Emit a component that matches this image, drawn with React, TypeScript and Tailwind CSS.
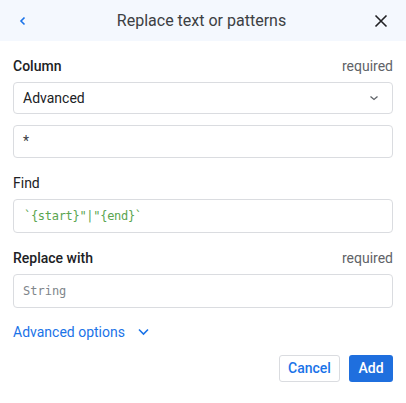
import React from "react";

export default function App() {
  const font = { fontFamily: "Roboto, 'Noto Sans', sans-serif" };
  const mono = { fontFamily: "'DejaVu Sans Mono', monospace" };
  return (
    <div className="w-[406px] h-[403px] bg-white text-[#202124]" style={font}>
      <div className="h-[41px] bg-[#f4f8fe] flex items-center justify-between pl-[16px] pr-[18px]">
        <svg width="12" height="12" viewBox="0 0 12 12" className="ml-[1px]">
          <path d="M7.5 2.5 L4 6 L7.5 9.5" fill="none" stroke="#1a73e8" strokeWidth="1.6" />
        </svg>
        <div className="text-[16px] text-[#3c4043]">Replace text or patterns</div>
        <svg width="14" height="14" viewBox="0 0 14 14">
          <path d="M1.5 1.5 L12.5 12.5 M12.5 1.5 L1.5 12.5" stroke="#202124" strokeWidth="1.6" />
        </svg>
      </div>
      <div className="px-[13px] pt-[15px]">
        <div className="h-[20px] flex items-center justify-between text-[14px]">
          <span className="font-medium">Column</span>
          <span className="text-[#5f6368]">required</span>
        </div>
        <div className="mt-[6px] h-[32px] border border-[#dadce0] rounded-[4px] flex items-center justify-between pl-[9px] pr-[13px]">
          <span className="text-[14px] text-[#202124]">Advanced</span>
          <svg width="10" height="10" viewBox="0 0 10 10">
            <path d="M1.5 3.5 L5 6.5 L8.5 3.5" fill="none" stroke="#5f6368" strokeWidth="1.3" />
          </svg>
        </div>
        <div className="mt-[11px] h-[33px] border border-[#dadce0] rounded-[4px] flex items-center pl-[9px]">
          <span className="text-[14px] text-[#3c4043]">*</span>
        </div>
        <div className="mt-[15px] h-[20px] flex items-center text-[14px]">
          <span>Find</span>
        </div>
        <div className="mt-[6px] h-[34px] border border-[#dadce0] rounded-[4px] flex items-center pl-[10px]">
          <span className="text-[12px] tracking-[-0.3px] text-[#5aa54f]" style={mono}>
            `{"{start}"}"|"{"{end}"}`
          </span>
        </div>
        <div className="mt-[15px] h-[20px] flex items-center justify-between text-[14px]">
          <span className="font-medium">Replace with</span>
          <span className="text-[#5f6368]">required</span>
        </div>
        <div className="mt-[6px] h-[34px] border border-[#dadce0] rounded-[4px] flex items-center pl-[9px]">
          <span className="text-[12px] text-[#80868b]" style={mono}>
            String
          </span>
        </div>
        <div className="mt-[14px] h-[20px] flex items-center gap-[13px] text-[#1a73e8]">
          <span className="text-[14px]">Advanced options</span>
          <svg width="11" height="8" viewBox="0 0 11 8">
            <path d="M1 1.5 L5.5 6 L10 1.5" fill="none" stroke="#1a73e8" strokeWidth="1.6" />
          </svg>
        </div>
        <div className="mt-[13px] flex justify-end gap-[9px]">
          <button className="h-[27px] w-[61px] border border-[#dadce0] rounded-[3px] text-[14px] font-medium text-[#1a73e8] bg-white">
            Cancel
          </button>
          <button className="h-[27px] w-[44px] rounded-[3px] text-[14px] font-medium text-white bg-[#1f6fde]">
            Add
          </button>
        </div>
      </div>
    </div>
  );
}
